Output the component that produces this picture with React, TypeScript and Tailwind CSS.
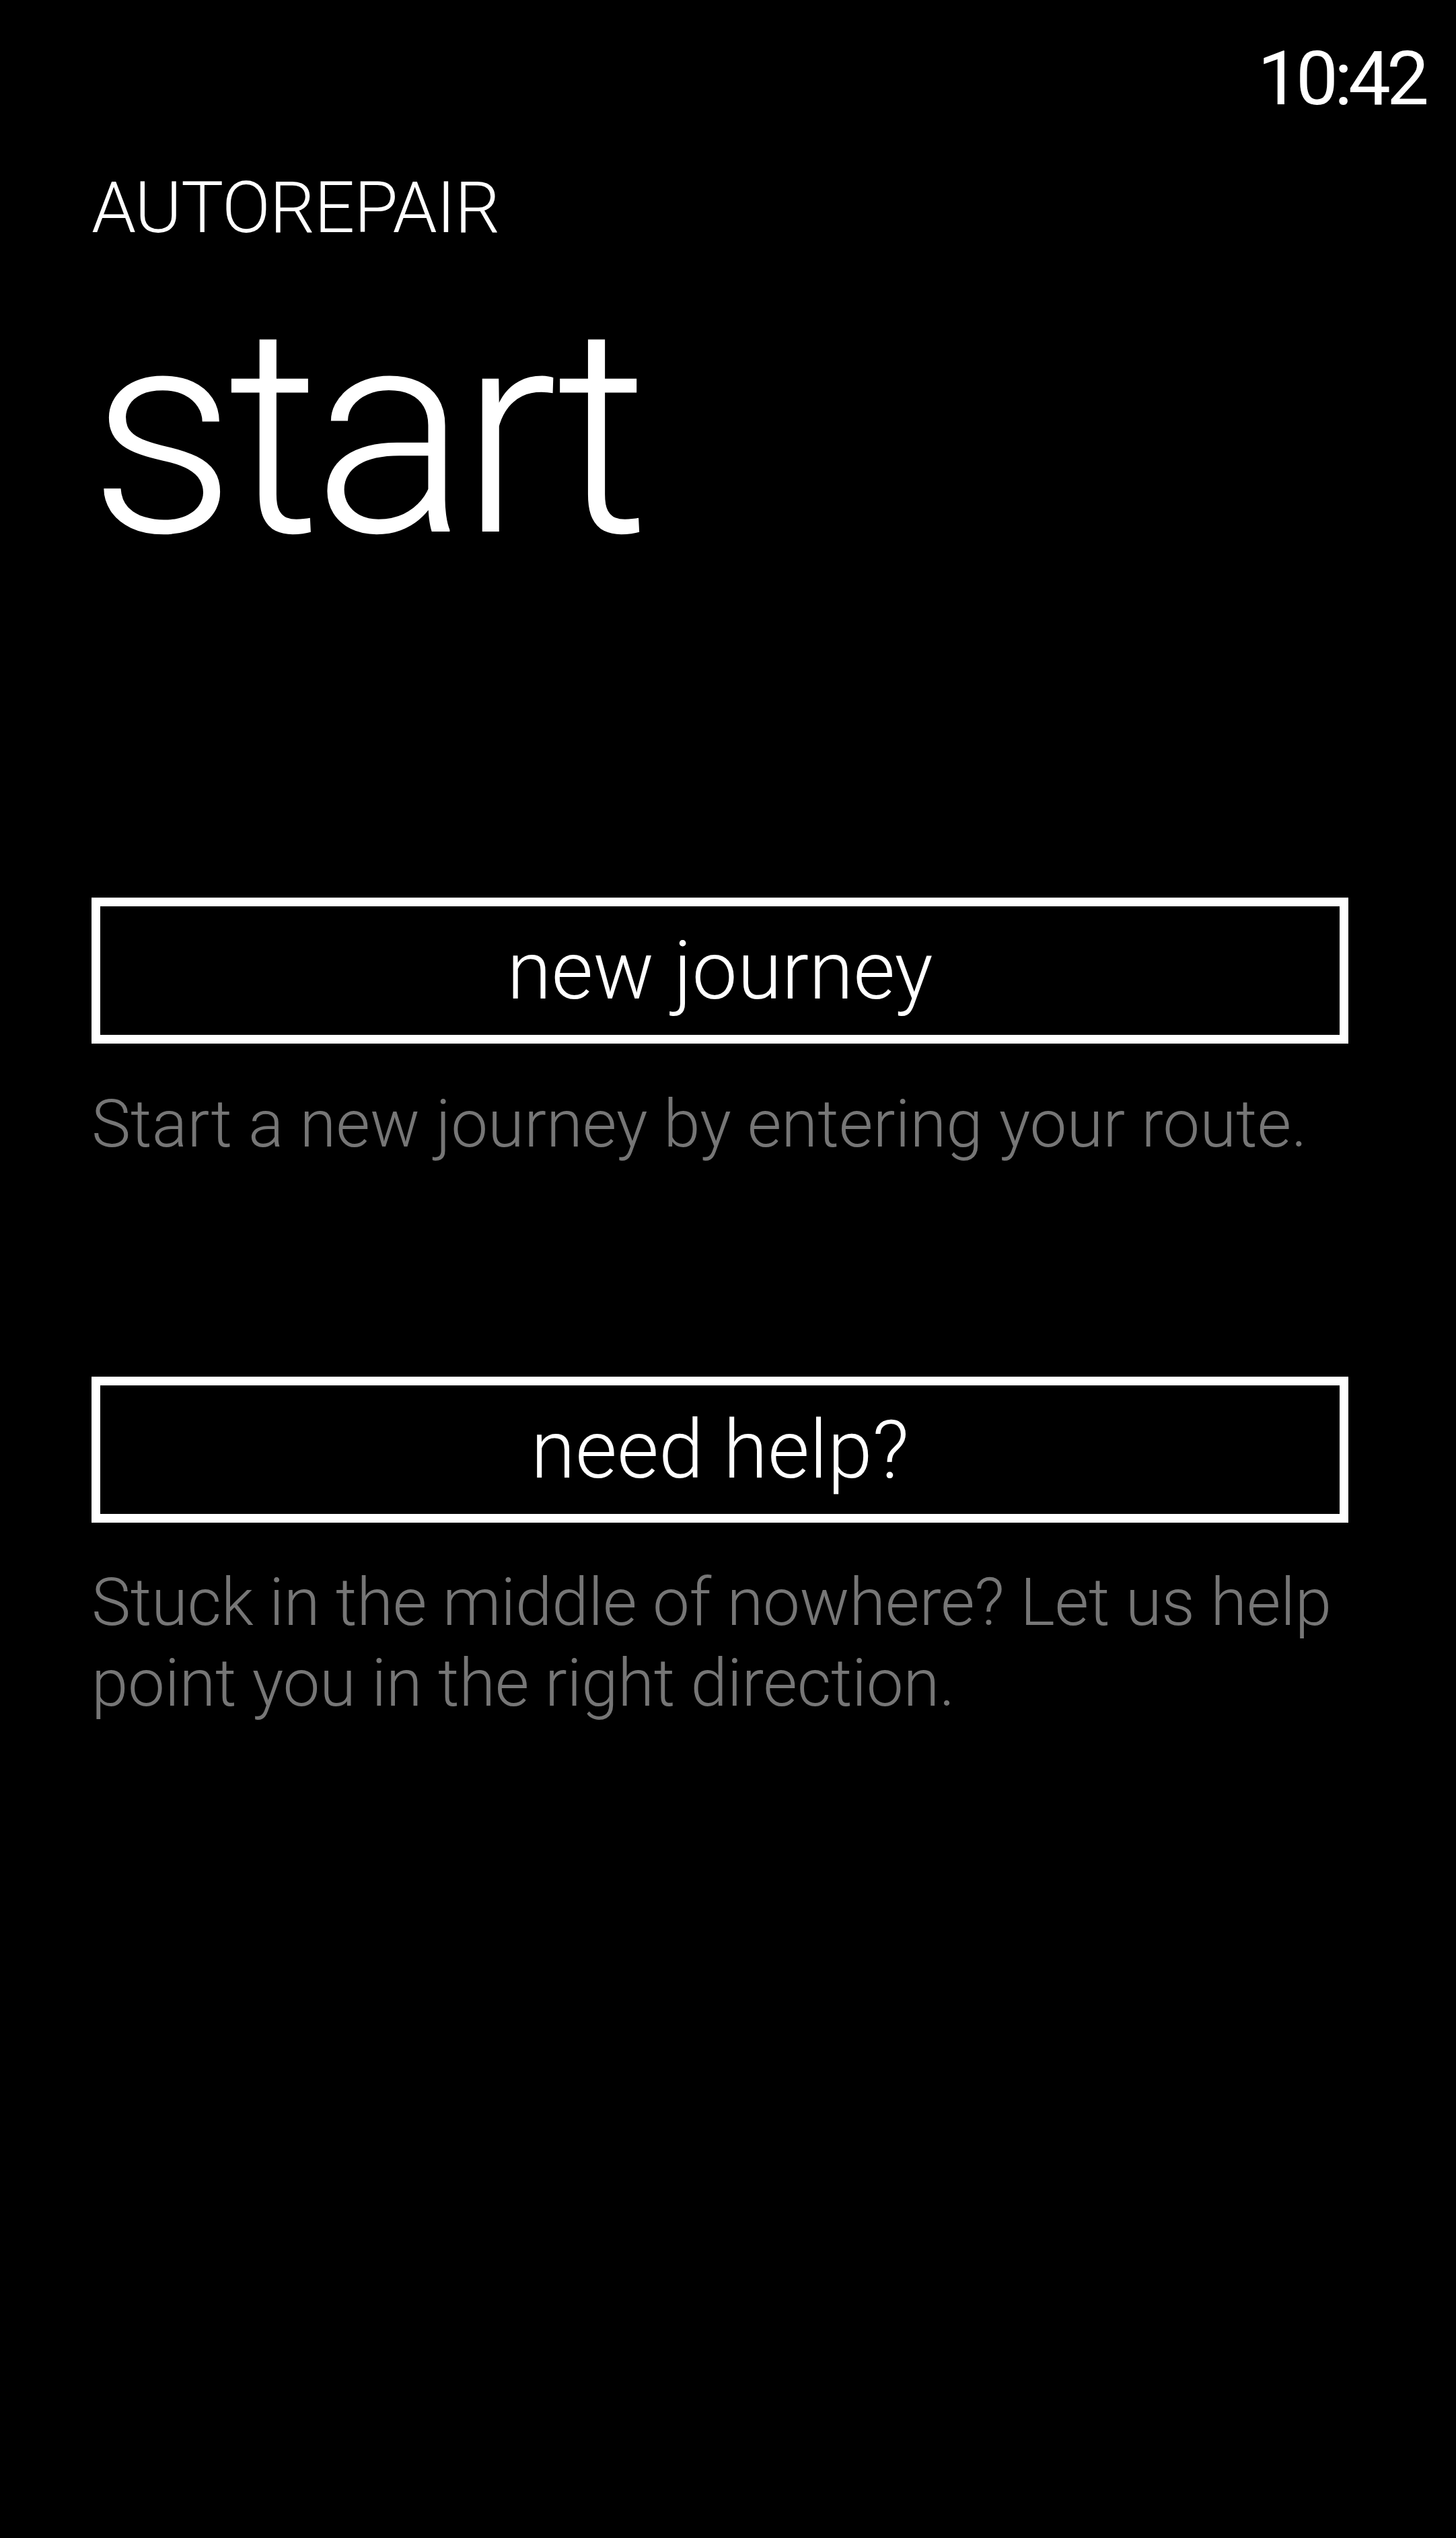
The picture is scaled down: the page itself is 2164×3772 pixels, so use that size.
import React from "react";

function TileButton({ label }: { label: string }) {
  return (
    <button
      type="button"
      className="mr-[24px] flex h-[217px] items-center justify-center border-[13px] border-white bg-black text-[120px] font-light leading-none text-white"
    >
      {label}
    </button>
  );
}

export default function App() {
  return (
    <div
      className="min-h-[3772px] w-full bg-black text-white"
      style={{ fontFamily: "Roboto, 'Noto Sans', sans-serif" }}
    >
      <div className="flex justify-end pr-[46px] pt-[61px] text-[112px] font-normal leading-none tracking-[-6px]">
        10:42
      </div>

      <div className="px-[136px]">
        <div className="mt-[83px] text-[106px] font-light leading-none tracking-[-1px]">AUTOREPAIR</div>
        <div className="-ml-[3px] mt-[66px] text-[430px] font-light leading-none tracking-[-12px]">start</div>

        <div className="mt-[476px] flex flex-col">
          <TileButton label="new journey" />
          <p className="mt-[60px] text-[98px] font-light leading-[120px] text-[#767676]">
            Start a new journey by entering your route.
          </p>

          <div className="mt-[315px] flex flex-col">
            <TileButton label="need help?" />
          </div>
          <p className="mt-[59px] text-[98px] font-light leading-[120px] tracking-[-0.3px] text-[#767676]">
            Stuck in the middle of nowhere? Let us help point you in the right direction.
          </p>
        </div>
      </div>
    </div>
  );
}
